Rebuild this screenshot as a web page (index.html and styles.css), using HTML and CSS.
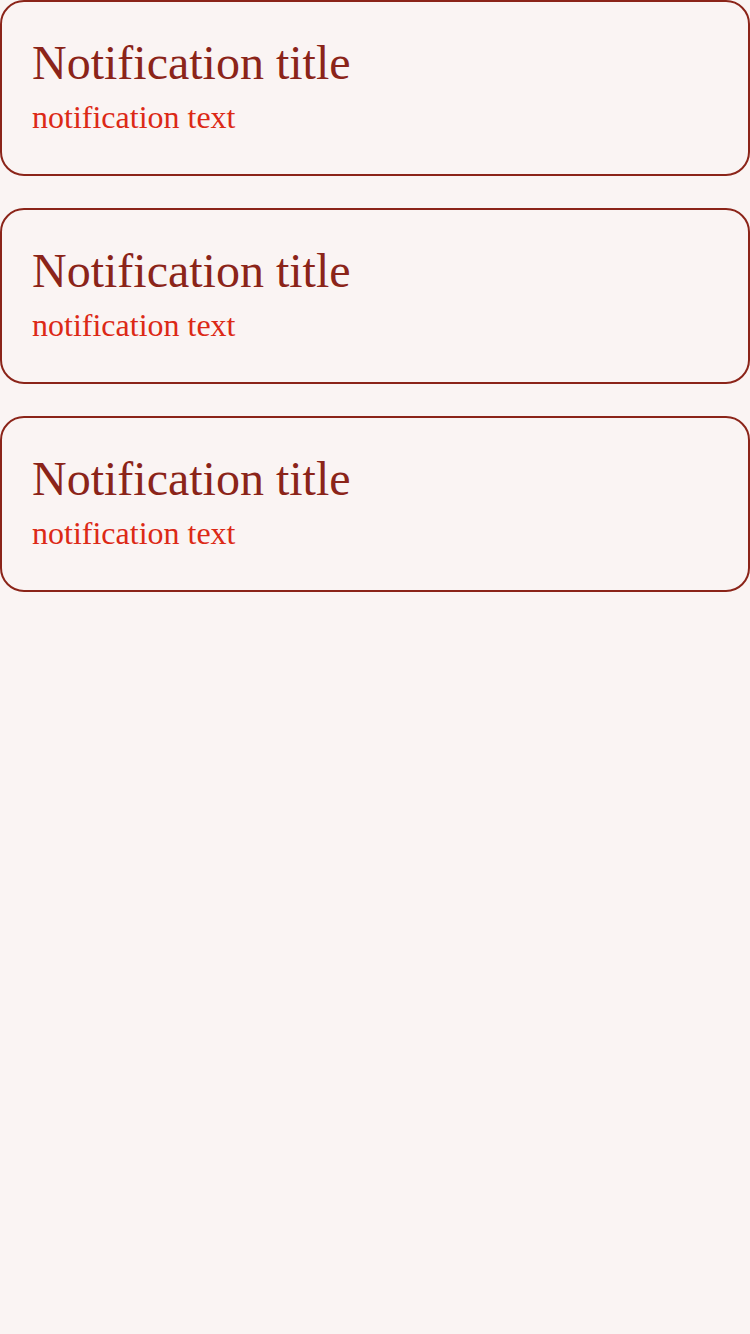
FILE: index.html
```html
<!DOCTYPE html>
<html lang="en">
<head>
<meta charset="utf-8">
<title>Notifications</title>
<link rel="stylesheet" href="styles.css">
</head>
<body>
<main class="list">
  <section class="card">
    <h1 class="title">Notification title</h1>
    <p class="text">notification text</p>
  </section>
  <section class="card">
    <h1 class="title">Notification title</h1>
    <p class="text">notification text</p>
  </section>
  <section class="card">
    <h1 class="title">Notification title</h1>
    <p class="text">notification text</p>
  </section>
</main>
</body>
</html>
```
FILE: styles.css
```css
html, body {
  margin: 0;
  padding: 0;
  background: #faf4f3;
  font-family: "Liberation Serif", "Times New Roman", serif;
}
body {
  width: 750px;
  min-height: 1334px;
}
.list {
  display: flex;
  flex-direction: column;
  gap: 32px;
}
.card {
  box-sizing: border-box;
  height: 176px;
  border: 2px solid #8b2419;
  border-radius: 24px;
  padding: 32px 30px 37px;
  display: flex;
  flex-direction: column;
}
.title {
  margin: 0;
  font-size: 48px;
  font-weight: normal;
  line-height: 58px;
  color: #8b2419;
}
.text {
  margin: 5px 0 0;
  font-size: 32px;
  line-height: 40px;
  color: #dc2916;
}
```
